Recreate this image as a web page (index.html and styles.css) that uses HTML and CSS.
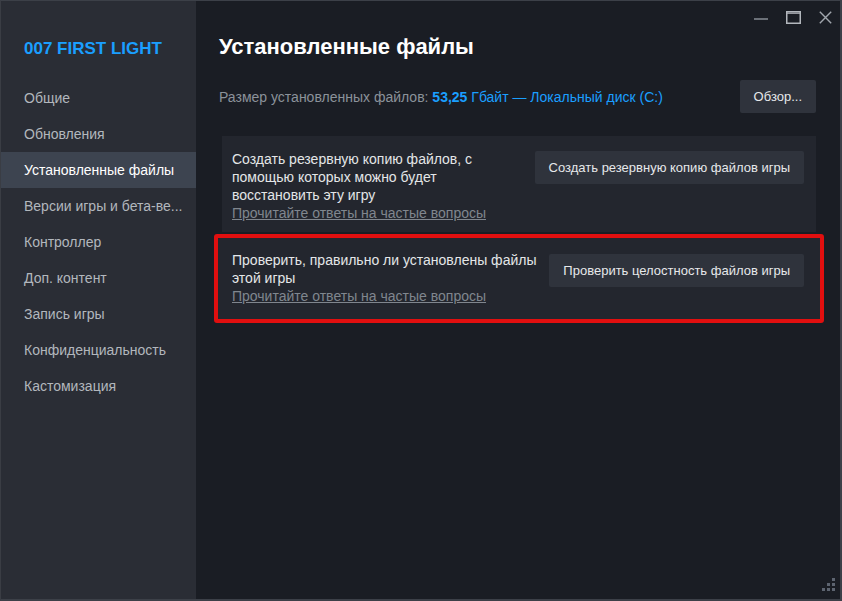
FILE: index.html
```html
<!DOCTYPE html>
<html lang="ru">
<head>
  <meta charset="utf-8">
  <title>Свойства — 007 First Light</title>
  <link rel="stylesheet" href="styles.css">
</head>
<body>
  <div class="window">
    <aside class="side">
      <div class="game">007 FIRST LIGHT</div>
      <nav class="menu">
        <div class="item">Общие</div>
        <div class="item">Обновления</div>
        <div class="item active">Установленные файлы</div>
        <div class="item">Версии игры и бета-ве...</div>
        <div class="item">Контроллер</div>
        <div class="item">Доп. контент</div>
        <div class="item">Запись игры</div>
        <div class="item">Конфиденциальность</div>
        <div class="item">Кастомизация</div>
      </nav>
    </aside>

    <main class="main">
      <div class="controls">
        <svg class="min" width="14" height="14" viewBox="0 0 14 14"><path d="M0 8h14" stroke="#80868f" stroke-width="1.6"/></svg>
        <svg class="max" width="15" height="13" viewBox="0 0 15 13"><rect x=".75" y=".75" width="13.5" height="11.5" fill="none" stroke="#b3b7bd" stroke-width="1.5"/><path d="M.75 2.2h13.5" stroke="#b3b7bd" stroke-width="1.2"/></svg>
        <svg class="close" width="13" height="13" viewBox="0 0 13 13"><path d="M.8 .8l11.4 11.4M12.2 .8L.8 12.2" stroke="#a1a6ad" stroke-width="1.4"/></svg>
      </div>

      <h1>Установленные файлы</h1>

      <div class="size-row">
        <div class="size">Размер установленных файлов: <span class="val"><b>53,25</b> Гбайт — Локальный диск (C:)</span></div>
        <button class="btn">Обзор...</button>
      </div>

      <div class="panel backup">
        <div class="desc">
          Создать резервную копию файлов, с помощью которых можно будет восстановить эту игру
          <a class="faq">Прочитайте ответы на частые вопросы</a>
        </div>
        <button class="btn">Создать резервную копию файлов игры</button>
      </div>

      <div class="highlight">
        <div class="panel verify">
          <div class="desc">
            Проверить, правильно ли установлены файлы этой игры
            <a class="faq">Прочитайте ответы на частые вопросы</a>
          </div>
          <button class="btn">Проверить целостность файлов игры</button>
        </div>
      </div>

      <div class="grip">
        <svg width="14" height="14" viewBox="0 0 14 14" fill="#5d6470">
          <rect x="10" y="0" width="3" height="3"/>
          <rect x="5" y="5" width="3" height="3"/><rect x="10" y="5" width="3" height="3"/>
          <rect x="0" y="10" width="3" height="3"/><rect x="5" y="10" width="3" height="3"/><rect x="10" y="10" width="3" height="3"/>
        </svg>
      </div>
    </main>
  </div>
</body>
</html>
```

FILE: styles.css
```css
/* --- page --- */
*{box-sizing:border-box}
html,body{height:100%}
body{margin:0;background:#3a3d44;font-family:Arial,"Liberation Sans",Helvetica,sans-serif;color:#dcdedf}
.window{display:flex;height:100%;border-top:1px solid #3c4048;border-right:2px solid #3c4048;border-bottom:2px solid #3c4048;border-left:1px solid #3a3d44}

/* --- sidebar --- */
.side{width:195px;flex:none;background:#2a2d35;padding-top:37px}
.game{padding-left:23px;font-size:17px;font-weight:bold;color:#1a9fff;height:22px;line-height:22px}
.menu{margin-top:20px}
.item{height:36px;line-height:36px;padding-left:23px;font-size:14px;color:#b2b7bd;white-space:nowrap}
.item.active{background:#3d4450;color:#fff}

/* --- main --- */
.main{flex:1;background:#1a1d24;padding:0 24px 0 23px;position:relative}
.controls{display:flex;justify-content:flex-end;align-items:center;height:33px;margin-right:-16px}
.controls .min{margin-right:18px}
.controls .max{margin-right:18px}
h1{margin:0;font-size:22px;font-weight:bold;color:#fff;line-height:26px}
.size-row{display:flex;align-items:center;justify-content:space-between;margin-top:20px;height:33px}
.size{font-size:14px;color:#8b929a}
.size .val{color:#1a9fff}
.btn{font-family:inherit;background:#2f333c;color:#e6e8ea;border:none;border-radius:2px;font-size:13px;height:33px;padding:0 14px;cursor:pointer}

/* --- option panels --- */
.panel{display:flex;justify-content:space-between;align-items:flex-start;background:#23262e}
.desc{font-size:14px;line-height:18px;color:#e4e6e8}
.faq{display:block;color:#80868e;text-decoration:underline}
.backup{margin:23px 0 0 3px;padding:14px 12px 10px 10px}
.backup .desc{width:270px}
.backup .btn{margin-top:1px}
.highlight{border:4px solid #e10f0f;border-radius:3px;margin:2px -8px 0 -5px}
.verify{padding:13px 16px 14px 14px}
.verify .desc{width:315px}
.verify .btn{margin-top:3px}
.grip{position:absolute;right:4px;bottom:3px}
```
